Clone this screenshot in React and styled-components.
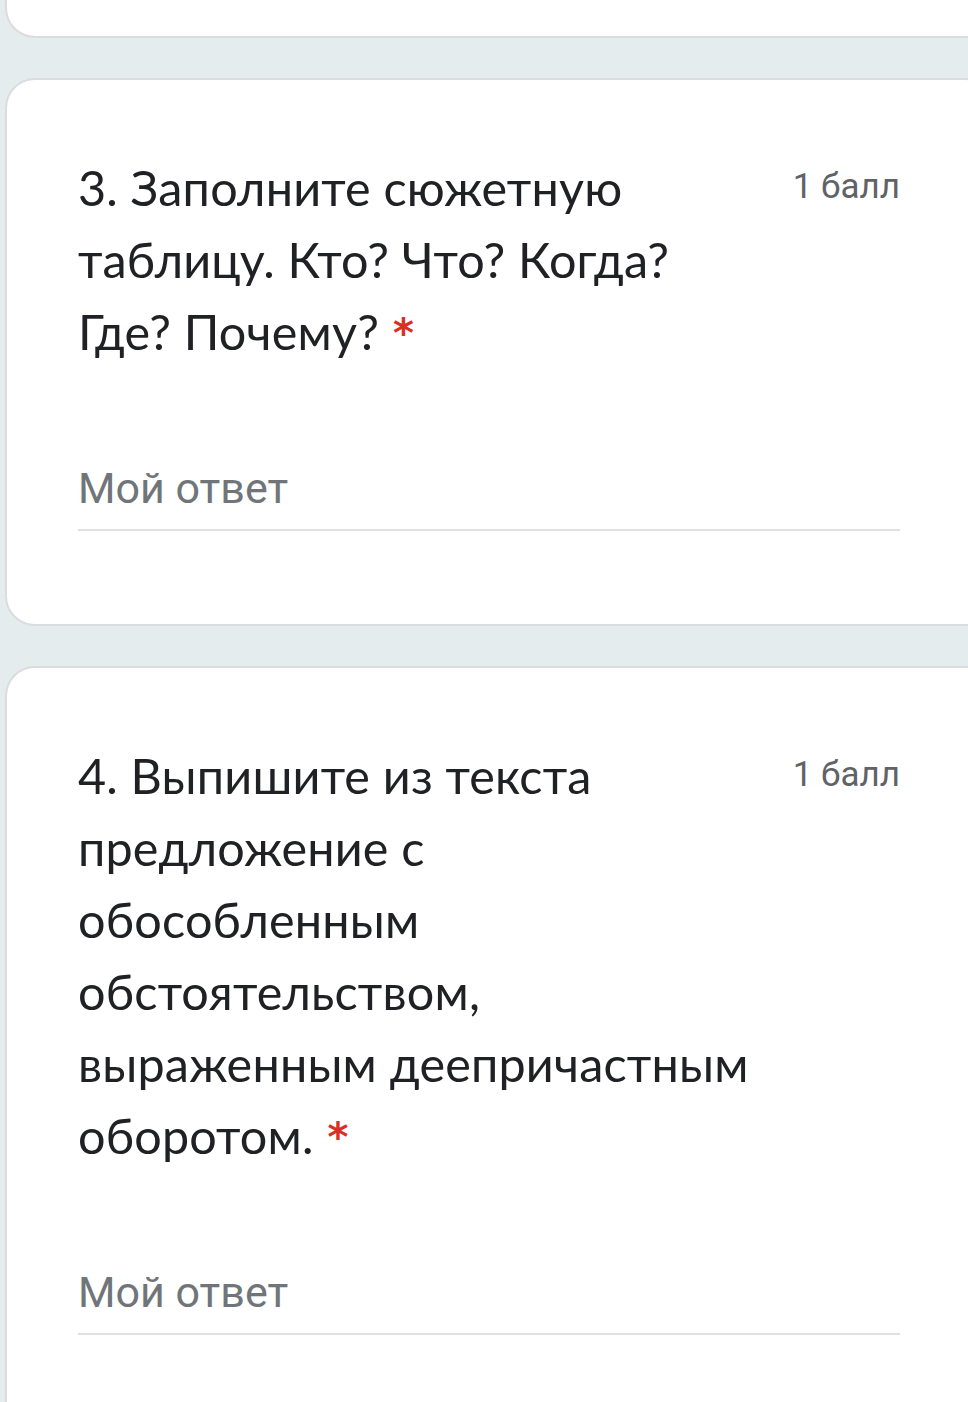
import styled, { createGlobalStyle } from "styled-components";

const GlobalStyle = createGlobalStyle`
  html, body {
    margin: 0;
    padding: 0;
    background: #e4ecee;
  }
  body {
    font-family: Roboto, "Liberation Sans", sans-serif;
  }
`;

const Page = styled.div`
  width: 968px;
  height: 1402px;
  overflow: hidden;
  background: #e4ecee;
  display: flex;
  flex-direction: column;
  gap: 40px;
  padding-left: 5px;
  box-sizing: border-box;
`;

const Card = styled.div`
  flex: none;
  width: 990px;
  background: #ffffff;
  border: 2px solid #dadce0;
  border-radius: 30px;
  box-sizing: border-box;
  padding: 71px 0 0 71px;
  height: ${(p) => p.$height}px;
`;

// the tail of the previous question, cut by the top of the screen
const CardTail = styled(Card)`
  border-top: none;
  border-top-left-radius: 0;
  border-top-right-radius: 0;
  padding: 0;
`;

const Inner = styled.div`
  width: 822px;
`;

const Header = styled.div`
  display: flex;
  align-items: flex-start;
  justify-content: space-between;
  gap: 24px;
`;

const Question = styled.div`
  width: 690px;
  font-family: Lato, "Noto Sans", sans-serif;
  font-size: 48.5px;
  line-height: 72px;
  color: #202124;
  letter-spacing: 0.2px;
`;

const Star = styled.span`
  color: #d93025;
  margin-left: 14px;
  font-family: "DejaVu Sans", sans-serif;
  font-size: 40px;
  font-weight: bold;
  vertical-align: 3px;
`;

const Points = styled.div`
  flex: none;
  font-family: Roboto, sans-serif;
  font-size: 35px;
  line-height: 72px;
  color: #5f6368;
`;

const Answer = styled.div`
  margin-top: 95px;
  padding-bottom: 17px;
  border-bottom: 2px solid #e0e0e0;
  font-family: Roboto, sans-serif;
  font-size: 43px;
  line-height: 48px;
  color: #70757a;
`;

const questions = [
  {
    id: 3,
    text: "3. Заполните сюжетную таблицу. Кто? Что? Когда? Где? Почему?",
    height: 548,
  },
  {
    id: 4,
    text:
      "4. Выпишите из текста предложение с обособленным обстоятельством, выраженным деепричастным оборотом.",
    height: 900,
  },
];

export default function App() {
  return (
    <>
      <GlobalStyle />
      <Page>
        <CardTail $height={38} />
        {questions.map((q) => (
          <Card key={q.id} $height={q.height}>
            <Inner>
              <Header>
                <Question>
                  {q.text}
                  <Star>*</Star>
                </Question>
                <Points>1 балл</Points>
              </Header>
              <Answer>Мой ответ</Answer>
            </Inner>
          </Card>
        ))}
      </Page>
    </>
  );
}
